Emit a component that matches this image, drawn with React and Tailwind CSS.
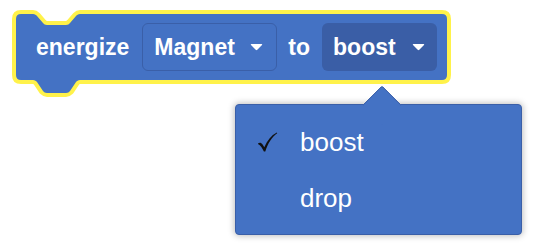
import React from "react";

const Caret = () => (
  <svg width="13" height="8" viewBox="0 0 13 8" className="shrink-0">
    <path d="M1.5 1 H11.5 Q12.8 1 12 2.1 L7.3 6.8 Q6.5 7.6 5.7 6.8 L1 2.1 Q0.2 1 1.5 1 Z" fill="#ffffff" />
  </svg>
);

const Check = () => (
  <svg width="21" height="20" viewBox="0 0 21 20">
    <path
      d="M1,11.6 C2.6,10.1 4.2,10.6 5.6,12.6 L7.3,15.2 C10.2,8.6 14.2,3.6 19.8,0.6 L20.2,1.2 C14.9,5.1 10.9,11.2 8.3,19.4 L6.9,19.5 C5.4,16.1 3.6,13.2 1,11.9 Z"
      fill="#111111"
    />
  </svg>
);

// block outline with the notch on top and the tab underneath
const blockPath =
  "M0,5 Q0,0 5,0 H17 C19,0 20,1 21,2 L27,9 C28,10 29,11 31,11 H50 C52,11 53,10 54,9 L60,2 C61,1 62,0 64,0 H426 Q431,0 431,5 V61 Q431,66 426,66 H64 C62,66 61,67 60,68 L54,77 C53,78 52,79 50,79 H31 C29,79 28,78 27,77 L21,68 C20,67 19,66 17,66 H5 Q0,66 0,61 Z";

const App = () => {
  const options = ["boost", "drop"];
  const selected = "boost";

  return (
    <div
      className="relative w-[540px] h-[252px] bg-white pl-[16px] pt-[14px] overflow-hidden"
      style={{ fontFamily: '"Liberation Sans", Arial, sans-serif' }}
    >
      {/* Block */}
      <div className="relative w-[431px] h-[66px] flex items-center pl-[20px] text-white font-bold text-[23px]">
        <svg className="absolute left-0 top-0 overflow-visible" width="431" height="66">
          <path
            d={blockPath}
            fill="#4472c4"
            stroke="#fff24a"
            strokeWidth="8"
            strokeLinejoin="round"
            paintOrder="stroke"
          />
        </svg>
        <span className="relative">energize</span>
        <div className="relative ml-[13px] w-[135px] h-[48px] flex items-center justify-between pl-[11px] pr-[13px] rounded-[6px] border border-[#3a5fa8] bg-[#4472c4]">
          <span>Magnet</span>
          <Caret />
        </div>
        <span className="relative ml-[11px]">to</span>
        <div className="relative ml-[12px] w-[115px] h-[48px] flex items-center justify-between pl-[11px] pr-[12px] rounded-[6px] bg-[#3a5ea6]">
          <span>boost</span>
          <Caret />
        </div>
      </div>

      {/* Dropdown menu */}
      <div className="absolute left-[235px] top-[104px] w-[287px] h-[131px] rounded-[4px] border border-[#3a5fa8] bg-[#4472c4] shadow-[0_0_6px_1px_rgba(0,0,0,0.25)] pt-[9px] pb-[8px]">
        <div className="absolute left-[132px] -top-[14px] w-[28px] h-[28px] rotate-45 bg-[#4472c4] border-t border-l border-[#3a5fa8] rounded-tl-[3px] z-10" />
        {options.map((opt) => (
          <div key={opt} className="relative z-20 flex items-center h-[56px] text-white text-[26px]">
            <span className="w-[64px] pl-[21px] flex items-center">
              {opt === selected ? <Check /> : null}
            </span>
            <span>{opt}</span>
          </div>
        ))}
      </div>
    </div>
  );
};

export default App;
